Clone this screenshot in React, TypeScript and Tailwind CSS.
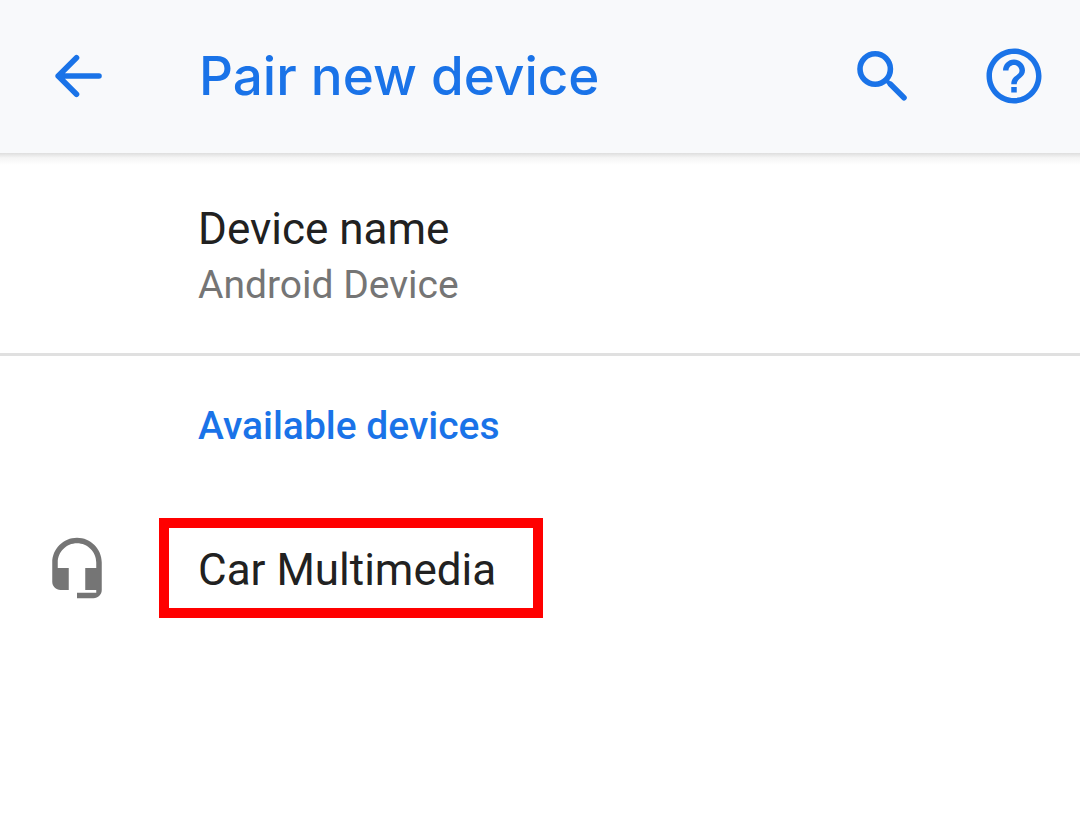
import React from "react";

function BackIcon() {
  return (
    <svg viewBox="0 0 66 66" className="size-[66px]" fill="none" stroke="currentColor" strokeWidth="5.6" strokeLinecap="round" strokeLinejoin="round" aria-hidden="true">
      <path d="M32.5 14.7 14.2 33l18.3 18.3M14.2 33H55" />
    </svg>
  );
}

function SearchIcon() {
  return (
    <svg viewBox="0 0 66 66" className="size-[66px]" fill="none" stroke="currentColor" strokeWidth="5.6" aria-hidden="true">
      <circle cx="26.2" cy="26" r="15.2" />
      <path d="M36.5 36.5 42 42" strokeWidth="4" />
      <path d="M41.5 41.2 55 54.8" strokeLinecap="round" />
    </svg>
  );
}

function HelpIcon() {
  return (
    <svg viewBox="0 0 24 24" className="size-[66px]" fill="currentColor" aria-hidden="true">
      <path d="M11 18h2v-2h-2v2zm1-16C6.48 2 2 6.48 2 12s4.48 10 10 10 10-4.48 10-10S17.52 2 12 2zm0 18c-4.41 0-8-3.59-8-8s3.59-8 8-8 8 3.59 8 8-3.59 8-8 8zm0-14c-2.21 0-4 1.79-4 4h2c0-1.1.9-2 2-2s2 .9 2 2c0 2-3 1.75-3 5h2c0-2.25 3-2.5 3-5 0-2.21-1.79-4-4-4z" />
    </svg>
  );
}

function HeadsetIcon() {
  return (
    <svg viewBox="0 0 24 24" className="size-[66px] shrink-0 text-[#757575]" fill="currentColor" aria-hidden="true">
      <path d="M12 1c-4.97 0-9 4.03-9 9v7c0 1.66 1.34 3 3 3h3v-8H5v-2c0-3.87 3.13-7 7-7s7 3.13 7 7v2h-4v8h4v1h-7v2h6c1.66 0 3-1.34 3-3V10c0-4.97-4.03-9-9-9z" />
    </svg>
  );
}

export default function App() {
  return (
    <div className="min-h-screen bg-white font-['Roboto',sans-serif] text-[#212121]">
      <header className="flex items-center bg-[#f8f9fb] pt-[43px] pr-[33px] pb-11 pl-11 text-[#1a73e8]">
        <button type="button" aria-label="Navigate up">
          <BackIcon />
        </button>
        <h1 className="ml-[89px] flex-1 font-['Inter',sans-serif] text-[53px] leading-[66px] font-medium whitespace-nowrap">
          Pair new device
        </h1>
        <div className="flex gap-[66px]">
          <button type="button" aria-label="Search">
            <SearchIcon />
          </button>
          <button type="button" aria-label="Help">
            <HelpIcon />
          </button>
        </div>
      </header>
      <div className="h-3 bg-linear-to-b from-[#dedede] via-[#f5f5f5] via-40% to-white" />
      <main>
        <button type="button" className="block w-full border-b-[3px] border-[#e0e0e0] pt-9 pb-10 pl-[198px] text-left">
          <span className="block text-[44px] leading-[56px]">Device name</span>
          <span className="block text-[39px] leading-[56px] text-[#757575]">Android Device</span>
        </button>
        <section className="pt-[42px]">
          <h2 className="pl-[198px] text-[39px] leading-[56px] font-medium text-[#1a73e8]">Available devices</h2>
          <button type="button" className="mt-16 flex w-full items-center gap-[49px] pl-11 text-left">
            <HeadsetIcon />
            <span className="border-[10px] border-[#ff0000] pt-1 pr-[37px] pl-[29px] text-[44px] leading-[76px]">
              Car Multimedia
            </span>
          </button>
        </section>
      </main>
    </div>
  );
}
